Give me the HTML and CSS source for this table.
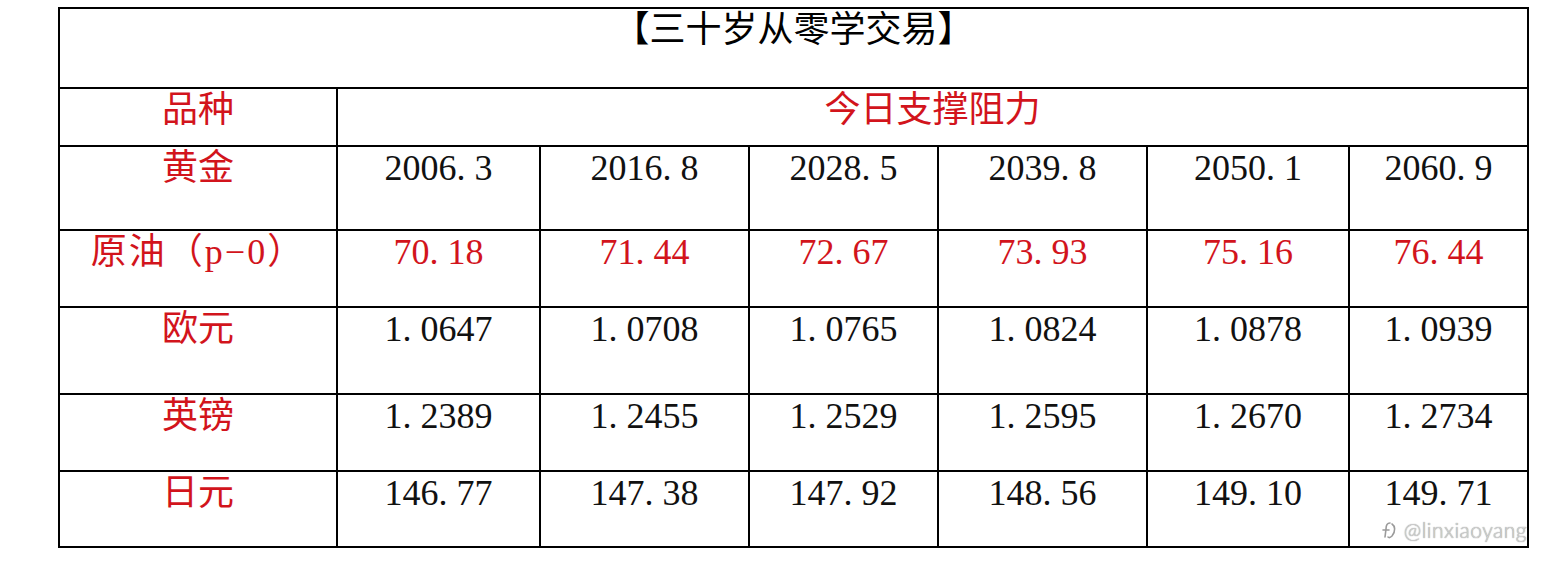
FILE: index.html
```html
<!DOCTYPE html>
<html lang="zh-CN">
<head>
<meta charset="utf-8">
<title>今日支撑阻力</title>
<link rel="stylesheet" href="styles.css">
</head>
<body>
<div class="sheet">
  <table class="grid">
    <colgroup>
      <col class="c1"><col class="c2"><col class="c3"><col class="c4"><col class="c5"><col class="c6"><col class="c7">
    </colgroup>
    <tr class="r-title"><td colspan="7" class="title">【三十岁从零学交易】</td></tr>
    <tr class="r-head"><td class="red">品种</td><td colspan="6" class="red">今日支撑阻力</td></tr>
    <tr class="r-gold"><td class="red">黄金</td><td>2006. 3</td><td>2016. 8</td><td>2028. 5</td><td>2039. 8</td><td>2050. 1</td><td>2060. 9</td></tr>
    <tr class="r-oil red"><td class="oil">原油（p−0）</td><td>70. 18</td><td>71. 44</td><td>72. 67</td><td>73. 93</td><td>75. 16</td><td>76. 44</td></tr>
    <tr class="r-eur"><td class="red">欧元</td><td>1. 0647</td><td>1. 0708</td><td>1. 0765</td><td>1. 0824</td><td>1. 0878</td><td>1. 0939</td></tr>
    <tr class="r-gbp"><td class="red">英镑</td><td>1. 2389</td><td>1. 2455</td><td>1. 2529</td><td>1. 2595</td><td>1. 2670</td><td>1. 2734</td></tr>
    <tr class="r-jpy"><td class="red">日元</td><td>146. 77</td><td>147. 38</td><td>147. 92</td><td>148. 56</td><td>149. 10</td><td>149. 71</td></tr>
  </table>
  <div class="mark">
    <svg class="mark-icon" width="18" height="20" viewBox="0 0 18 20" aria-hidden="true">
      <path d="M9 3 C6 3 5 6 5 9 L4 17 M2 10 L8 10 M11 4 C14 6 15 11 11 16 C10 17 8 18 7 17" fill="none" stroke="#9a9a9a" stroke-width="1.6" stroke-linecap="round"/>
    </svg>
    <span class="mark-text">@linxiaoyang</span>
  </div>
</div>
</body>
</html>
```

FILE: styles.css
```css
html, body {
  margin: 0;
  padding: 0;
  background: #ffffff;
}

.sheet {
  position: relative;
  width: 1469px;
  margin: 7px 0 0 58px;
}

.grid {
  border-collapse: collapse;
  table-layout: fixed;
  width: 1469px;
  font-family: "Liberation Serif", "Noto Sans CJK SC", serif;
  font-size: 36px;
  line-height: 40px;
  color: #111111;
}

.grid td {
  border: 2px solid #000000;
  padding: 1px 0 0 0;
  text-align: center;
  vertical-align: top;
  white-space: nowrap;
  overflow: hidden;
}

.c1 { width: 278px; }
.c2 { width: 203px; }
.c3 { width: 209px; }
.c4 { width: 189px; }
.c5 { width: 209px; }
.c6 { width: 202px; }
.c7 { width: 179px; }

.r-title { height: 80px; }
.r-head { height: 58px; }
.r-gold { height: 84px; }
.r-oil { height: 77px; }
.r-eur { height: 87px; }
.r-gbp { height: 77px; }
.r-jpy { height: 76px; }

.title {
  color: #000000;
}

.red,
.red td {
  color: #d2141c;
}

.oil {
  letter-spacing: 2px;
}

.mark {
  position: absolute;
  right: 0;
  bottom: 6px;
  display: flex;
  align-items: center;
  gap: 5px;
}

.mark-icon {
  display: block;
}

.mark-text {
  font-family: "Lato", "Liberation Sans", sans-serif;
  font-weight: 300;
  font-size: 21px;
  letter-spacing: 0.5px;
  color: #d4d4d4;
  text-shadow: 0 0 1px #6a6a6a;
}
```
